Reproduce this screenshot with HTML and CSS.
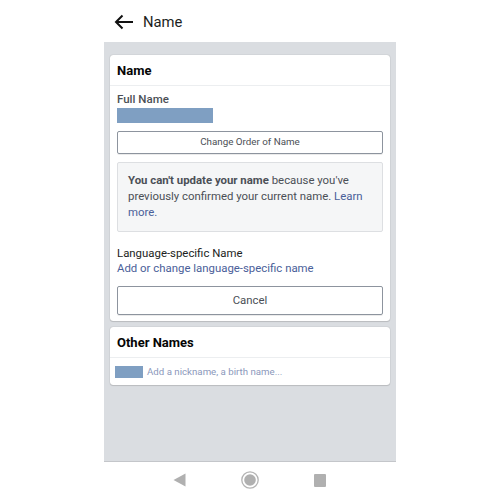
FILE: index.html
```html
<!DOCTYPE html>
<html lang="en">
<head>
<meta charset="utf-8">
<title>Name</title>
<link rel="stylesheet" href="styles.css">
</head>
<body>
<div class="phone">
  <header class="topbar">
    <svg class="back" width="20" height="16" viewBox="0 0 20 16"><path d="M19 8H2M8.500 1.500L2 8l6.500 6.500" fill="none" stroke="#111" stroke-width="2"/></svg>
    <span class="title">Name</span>
  </header>
  <main class="content">
    <section class="card">
      <h2 class="card-head">Name</h2>
      <div class="card-body">
        <div class="label">Full Name</div>
        <div class="redact redact-name"></div>
        <div class="btn btn-small">Change Order of Name</div>
        <div class="notice"><strong>You can't update your name</strong> because you've previously confirmed your current name. <span class="link">Learn more.</span></div>
        <div class="lang-label">Language-specific Name</div>
        <div class="lang-link link">Add or change language-specific name</div>
        <div class="btn btn-large">Cancel</div>
      </div>
    </section>
    <section class="card">
      <h2 class="card-head">Other Names</h2>
      <div class="other-row">
        <div class="redact redact-add"></div>
        <span class="other-text">Add a nickname, a birth name...</span>
      </div>
    </section>
  </main>
  <nav class="navbar">
    <svg width="13" height="14" viewBox="0 0 13 14"><path d="M12.500 0.500V13.500L0.500 7z" fill="#b0b0b0"/></svg>
    <svg width="18" height="18" viewBox="0 0 18 18"><circle cx="9" cy="9" r="8.200" fill="none" stroke="#b4b4b4" stroke-width="1.300"/><circle cx="9" cy="9" r="5.800" fill="#b0b0b0"/></svg>
    <svg width="12" height="13" viewBox="0 0 12 13"><rect width="12" height="13" rx="1" fill="#b0b0b0"/></svg>
  </nav>
</div>
</body>
</html>
```
FILE: styles.css
```css
html, body {
  margin: 0;
  padding: 0;
  background: #fff;
}
body {
  font-family: Roboto, "Liberation Sans", sans-serif;
  color: #1c1e21;
}
.phone {
  width: 292px;
  height: 500px;
  margin: 0 auto;
  display: flex;
  flex-direction: column;
}
.topbar {
  height: 42px;
  flex: none;
  display: flex;
  align-items: center;
  padding: 1px 0 0 10px;
  gap: 9px;
  box-sizing: border-box;
}
.title {
  font-size: 14.800px;
  color: #1c1e21;
}
.content {
  height: 420px;
  flex: none;
  background: #dadde1;
  box-sizing: border-box;
  padding: 13px 6px 0;
  display: flex;
  flex-direction: column;
  gap: 6px;
  border-bottom: 1px solid #c4c6ca;
}
.card {
  background: #fff;
  border-radius: 3px;
  box-shadow: 0 0 1px rgba(0,0,0,.35), 0 1px 1px rgba(0,0,0,.12);
}
.card-head {
  box-sizing: content-box;
  margin: 0;
  height: 29px;
  padding: 1px 0 0 7px;
  line-height: 30px;
  font-size: 13px;
  font-weight: 700;
  color: #050505;
  border-bottom: 1px solid #eceef0;
}
.card-body {
  padding: 6px 7px 6px;
}
.label {
  font-size: 11.500px;
  line-height: 15px;
  font-weight: 500;
  color: #4b4f56;
}
.redact {
  background: #7f9fc2;
}
.redact-name {
  width: 96px;
  height: 15px;
  margin-top: 1px;
}
.btn {
  box-sizing: border-box;
  border: 1px solid #8d949e;
  border-radius: 2px;
  display: flex;
  align-items: center;
  justify-content: center;
  color: #4b4f56;
  box-shadow: 0 1px 0 rgba(0,0,0,.08);
}
.btn-small {
  height: 23px;
  margin-top: 8px;
  padding-bottom: 2px;
  font-size: 9.800px;
}
.btn-large {
  height: 29px;
  margin-top: 10px;
  padding-bottom: 2px;
  font-size: 11.400px;
}
.notice {
  box-sizing: border-box;
  height: 70px;
  margin-top: 8px;
  padding: 9px 10px 0;
  background: #f5f6f7;
  border: 1px solid #dddfe2;
  border-radius: 2px;
  font-size: 11.400px;
  line-height: 16px;
  color: #4b4f56;
}
.notice strong {
  font-weight: 700;
}
.link {
  color: #4a6099;
}
.lang-label {
  margin-top: 14px;
  font-size: 11.400px;
  line-height: 15px;
  color: #1c1e21;
}
.lang-link {
  font-size: 11.400px;
  line-height: 15px;
}
.other-row {
  height: 27px;
  display: flex;
  align-items: center;
  padding-left: 5px;
  gap: 4px;
}
.redact-add {
  width: 28px;
  height: 12px;
}
.other-text {
  font-size: 9.700px;
  color: #8b98bb;
}
.navbar {
  flex: 1;
  display: flex;
  align-items: center;
  justify-content: center;
  gap: 55px;
  padding: 0 2px 2px 0;
}
```
